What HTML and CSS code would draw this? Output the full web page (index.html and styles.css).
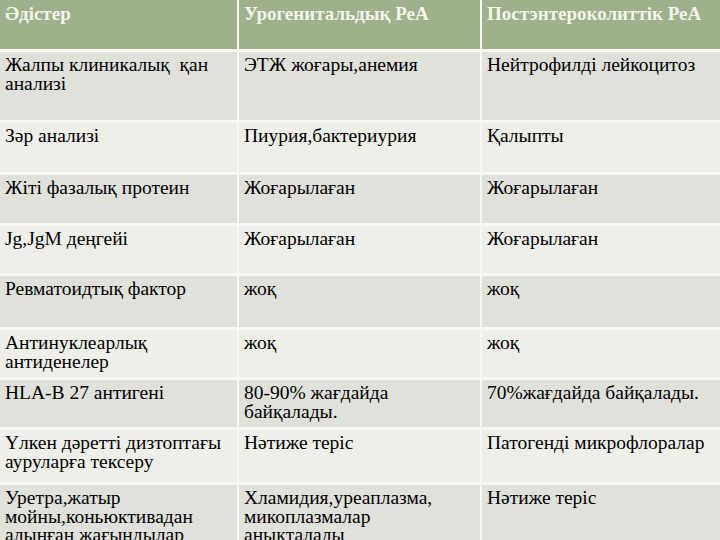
FILE: index.html
```html
<!DOCTYPE html>
<html lang="kk">
<head>
<meta charset="utf-8">
<title>Әдістер</title>
<link rel="stylesheet" href="styles.css">
</head>
<body>
<div class="table">
  <div class="cell head">Әдістер</div>
  <div class="cell head">Урогенитальдық РеА</div>
  <div class="cell head">Постэнтероколиттік РеА</div>

  <div class="cell dark">Жалпы клиникалық&nbsp; қан анализі</div>
  <div class="cell dark">ЭТЖ жоғары,анемия</div>
  <div class="cell dark">Нейтрофилді лейкоцитоз</div>

  <div class="cell light">Зәр анализі</div>
  <div class="cell light">Пиурия,бактериурия</div>
  <div class="cell light">Қалыпты</div>

  <div class="cell dark">Жіті фазалық протеин</div>
  <div class="cell dark">Жоғарылаған</div>
  <div class="cell dark">Жоғарылаған</div>

  <div class="cell light">Jg,JgM деңгейі</div>
  <div class="cell light">Жоғарылаған</div>
  <div class="cell light">Жоғарылаған</div>

  <div class="cell dark">Ревматоидтық фактор</div>
  <div class="cell dark">жоқ</div>
  <div class="cell dark">жоқ</div>

  <div class="cell light">Антинуклеарлық антиденелер</div>
  <div class="cell light">жоқ</div>
  <div class="cell light">жоқ</div>

  <div class="cell dark">HLA-B 27 антигені</div>
  <div class="cell dark">80-90% жағдайда байқалады.</div>
  <div class="cell dark">70%жағдайда байқалады.</div>

  <div class="cell light">Үлкен дәретті дизтоптағы ауруларға тексеру</div>
  <div class="cell light">Нәтиже теріс</div>
  <div class="cell light">Патогенді микрофлоралар</div>

  <div class="cell dark">Уретра,жатыр мойны,коньюктивадан алынған жағындылар</div>
  <div class="cell dark">Хламидия,уреаплазма, микоплазмалар<br>анықталады</div>
  <div class="cell dark">Нәтиже теріс</div>
</div>
</body>
</html>
```
FILE: styles.css
```css
html, body {
  margin: 0;
  padding: 0;
  width: 720px;
  height: 540px;
  overflow: hidden;
  background: #f7f7f3;
}

.table {
  display: grid;
  grid-template-columns: 237px 241px 238px;
  grid-template-rows: 49px 68px 49px 48px 47px 51px 47px 47px 52px 80px;
  column-gap: 2px;
  row-gap: 3px;
  background: #f7f7f3;
  font-family: "Liberation Serif", "DejaVu Serif", serif;
  font-size: 19.5px;
  line-height: 18.5px;
  color: #000;
}

.cell {
  padding: 4px 4px 0 5px;
  box-sizing: border-box;
}

.head {
  background: #9fb08c;
  color: #f3f5ec;
  font-weight: bold;
  font-size: 19px;
  padding-top: 5px;
}

.dark {
  background: #e1e1dc;
}

.light {
  background: #efefea;
}
```
